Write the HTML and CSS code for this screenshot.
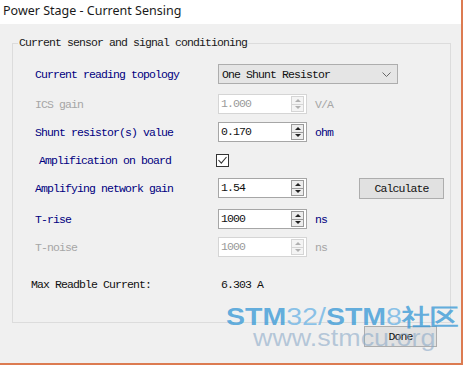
FILE: index.html
```html
<!DOCTYPE html>
<html lang="en">
<head>
    <meta charset="UTF-8">
    <title>Power Stage - Current Sensing</title>
    <link rel="stylesheet" href="styles.css">
</head>
<body>
    <div class="window">
        <div class="titlebar">Power Stage - Current Sensing</div>
        <div class="content">
            <fieldset class="group">
                <legend>Current sensor and signal conditioning</legend>
                <div class="rows">
                    <div class="row r-topology">
                        <span class="label">Current reading topology</span>
                        <div class="combo">
                            <span>One Shunt Resistor</span>
                            <svg class="chevron" width="9" height="5" viewBox="0 0 9 5"><polyline points="0.5,0.5 4.5,4.5 8.5,0.5" fill="none" stroke="#666" stroke-width="1"/></svg>
                        </div>
                    </div>
                    <div class="row r-ics disabled">
                        <span class="label">ICS gain</span>
                        <div class="spin">
                            <span class="val">1.000</span>
                            <span class="arrows"><i class="up"></i><i class="down"></i></span>
                        </div>
                        <span class="unit">V/A</span>
                    </div>
                    <div class="row r-shunt">
                        <span class="label">Shunt resistor(s) value</span>
                        <div class="spin">
                            <span class="val">0.170</span>
                            <span class="arrows"><i class="up"></i><i class="down"></i></span>
                        </div>
                        <span class="unit">ohm</span>
                    </div>
                    <div class="row r-board">
                        <span class="label">Amplification on board</span>
                        <span class="check">
                            <svg width="11" height="11" viewBox="0 0 11 11"><polyline points="1.5,5 4.3,8.2 9.5,2" fill="none" stroke="#333" stroke-width="1.1"/></svg>
                        </span>
                    </div>
                    <div class="row r-gain">
                        <span class="label">Amplifying network gain</span>
                        <div class="spin">
                            <span class="val">1.54</span>
                            <span class="arrows"><i class="up"></i><i class="down"></i></span>
                        </div>
                        <button class="btn calc">Calculate</button>
                    </div>
                    <div class="row r-rise">
                        <span class="label">T-rise</span>
                        <div class="spin">
                            <span class="val">1000</span>
                            <span class="arrows"><i class="up"></i><i class="down"></i></span>
                        </div>
                        <span class="unit">ns</span>
                    </div>
                    <div class="row r-noise disabled">
                        <span class="label">T-noise</span>
                        <div class="spin">
                            <span class="val">1000</span>
                            <span class="arrows"><i class="up"></i><i class="down"></i></span>
                        </div>
                        <span class="unit">ns</span>
                    </div>
                    <div class="row r-max">
                        <span class="label">Max Readble Current:</span>
                        <span class="result">6.303 A</span>
                    </div>
                </div>
            </fieldset>
            <div class="footer">
                <button class="btn done">Done</button>
            </div>
        </div>
        <div class="watermark">
            <div class="wm-brand"><b>STM</b>32/<b>STM</b>8<b>社区</b></div>
            <div class="wm-url">www.stmcu.org</div>
        </div>
    </div>
</body>
</html>
```

FILE: styles.css
```css
body {
    margin: 0;
    background: #f0f0f0;
}
.window {
    position: relative;
    width: 463px;
    height: 365px;
    box-sizing: border-box;
    border-right: 2px solid #dc7b51;
    border-bottom: 2px solid #dc7b51;
    background: #f0f0f0;
    overflow: hidden;
    font-family: "Liberation Mono", monospace;
    font-size: 11.5px;
    letter-spacing: -0.9px;
}
.titlebar {
    height: 24px;
    line-height: 22px;
    padding-left: 3px;
    background: #ffffff;
    color: #1a1a1a;
    font-family: "Noto Sans", sans-serif;
    font-size: 12.5px;
    letter-spacing: 0;
}
.content {
    padding: 13px 0 0 12px;
}
.group {
    margin: 0;
    width: 439px;
    height: 286px;
    box-sizing: border-box;
    border: 1px solid #dcdcdc;
    padding: 15px 0 0 5px;
}
.group legend {
    padding: 0 1px;
    line-height: 12px;
    color: #1a1a1a;
}
.rows {
    padding-left: 17px;
}
.row {
    display: flex;
    align-items: center;
    height: 20px;
    margin-top: 8px;
}
.row.r-topology { margin-top: 0; }
.row.r-ics { margin-top: 10px; }
.row.r-rise { margin-top: 11px; }
.row.r-max { margin-top: 17px; }
.label {
    width: 183px;
    flex: none;
    color: #000080;
}
.r-board .label {
    padding-left: 4px;
    width: 178px;
}
.r-max .label {
    margin-left: -4px;
    width: 190px;
    color: #111111;
}
.disabled .label,
.disabled .unit {
    color: #a6a6a6;
}
.combo {
    display: flex;
    align-items: center;
    justify-content: space-between;
    width: 180px;
    height: 20px;
    box-sizing: border-box;
    padding: 0 6px 0 3px;
    background: #e5e5e5;
    border: 1px solid #adadad;
    color: #111111;
}
.chevron {
    display: block;
}
.spin {
    display: flex;
    align-items: stretch;
    width: 89px;
    height: 20px;
    box-sizing: border-box;
    border: 1px solid #a6a6a6;
    background: #ffffff;
    padding: 1px 2px 1px 1px;
}
.spin .val {
    flex: 1;
    line-height: 16px;
    padding-left: 1px;
    color: #111111;
}
.arrows {
    display: flex;
    flex-direction: column;
    width: 13px;
}
.arrows i {
    flex: 1;
    display: flex;
    align-items: center;
    justify-content: center;
    background: #ededed;
    border: 1px solid #9a9a9a;
}
.arrows i + i {
    border-top: none;
}
.arrows i::after {
    content: "";
    border-left: 3px solid transparent;
    border-right: 3px solid transparent;
}
.arrows .up::after {
    border-bottom: 3px solid #222;
}
.arrows .down::after {
    border-top: 3px solid #222;
}
.disabled .spin {
    border-color: #d5d5d5;
}
.disabled .spin .val {
    color: #9a9a9a;
}
.disabled .arrows i {
    border-color: #d5d5d5;
    background: #f4f4f4;
}
.disabled .arrows .up::after { border-bottom-color: #b0b0b0; }
.disabled .arrows .down::after { border-top-color: #b0b0b0; }
.unit {
    margin-left: 8px;
    color: #000080;
}
.check {
    display: flex;
    align-items: center;
    justify-content: center;
    width: 13px;
    height: 13px;
    box-sizing: border-box;
    margin-left: -1px;
    border: 1px solid #333333;
    background: #ffffff;
}
.btn {
    font-family: "Liberation Mono", monospace;
    font-size: 11.5px;
    letter-spacing: -0.9px;
    color: #111111;
    background: #e1e1e1;
    border: 1px solid #adadad;
    padding: 0;
}
.calc {
    margin-left: 52px;
    width: 85px;
    height: 21px;
}
.result {
    color: #111111;
}
.footer {
    display: flex;
    justify-content: flex-end;
    padding-right: 24px;
    margin-top: 3px;
}
.done {
    width: 73px;
    height: 21px;
}
.watermark {
    position: absolute;
    left: 226px;
    top: 306px;
    font-family: "Liberation Sans", sans-serif;
    letter-spacing: 0;
    line-height: 1;
}
.wm-brand {
    font-size: 23px;
    color: rgba(120, 185, 230, 0.85);
    transform: scaleX(1.24);
    transform-origin: left top;
}
.wm-brand b {
    color: rgba(60, 155, 215, 0.8);
}
.wm-url {
    margin: -2px 0 0 27px;
    font-size: 23px;
    color: rgba(140, 170, 200, 0.6);
    transform: scaleX(1.17);
    transform-origin: left top;
}
```
